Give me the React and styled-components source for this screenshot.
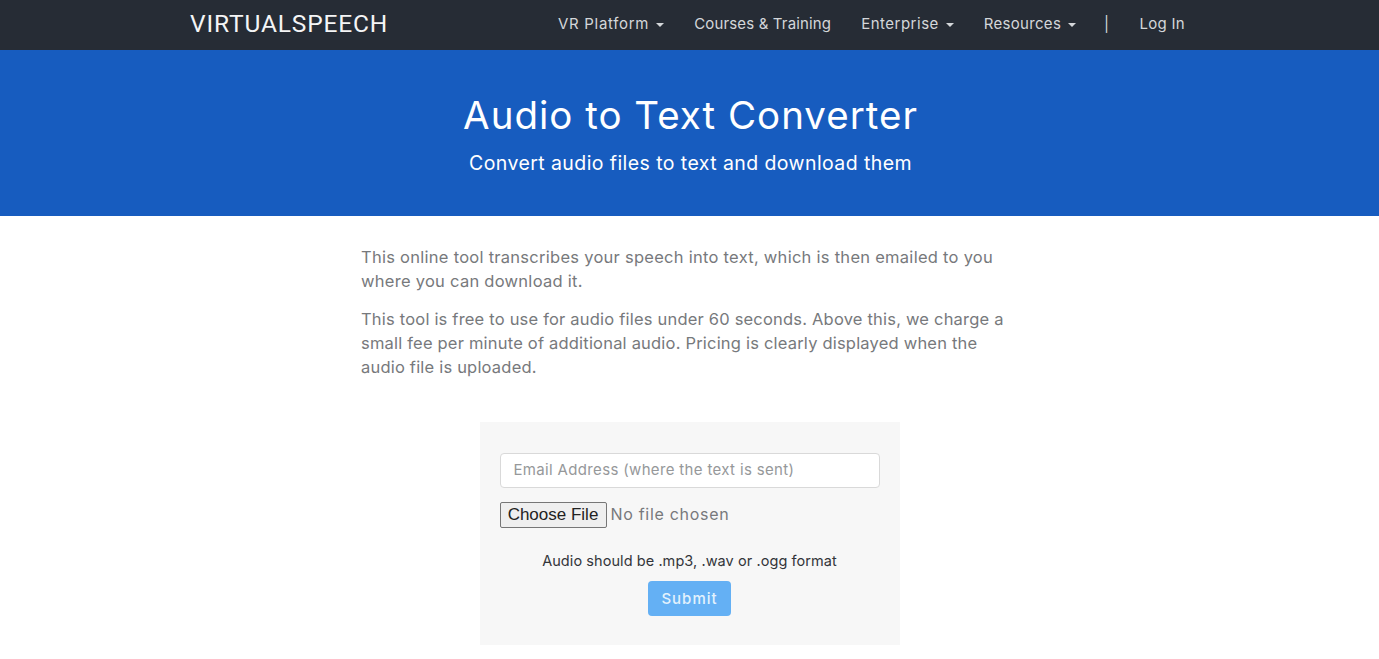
import styled, { createGlobalStyle } from "styled-components"

const GlobalStyle = createGlobalStyle`
    html, body {
        margin: 0;
        padding: 0;
        background: #fff;
        font-family: "Inter", "Open Sans", sans-serif;
    }
    * {
        box-sizing: border-box;
    }
`;

const NavBar = styled.nav`
    height: 50px;
    background: #262c35;
    display: flex;
    align-items: center;
    justify-content: space-between;
    padding: 0 194px 3px 190px;
`;

const Logo = styled.a`
    font-family: "Roboto", sans-serif;
    font-weight: 400;
    font-size: 24.5px;
    letter-spacing: 0.85px;
    color: #f4f5f6;
`;

const NavLinks = styled.div`
    display: flex;
    align-items: center;
    gap: 30px;
`;

const NavLink = styled.a`
    display: flex;
    align-items: center;
    gap: 7px;
    font-size: 15px;
    letter-spacing: ${(props) => props.$spacing || "0.3px"};
    color: #d4d7da;
`;

const Divider = styled(NavLink)`
    margin-left: -2px;
`;

const Caret = styled.span`
    width: 0;
    height: 0;
    margin-top: 2px;
    border-left: 4px solid transparent;
    border-right: 4px solid transparent;
    border-top: 4px solid #d4d7da;
`;

const Hero = styled.header`
    height: 166px;
    background: #175cbf;
    color: #fff;
    text-align: center;
    padding: 42px 0 0 2px;
`;

const Title = styled.h1`
    margin: 0;
    font-size: 38.5px;
    line-height: 46px;
    font-weight: 400;
    letter-spacing: 1px;
`;

const Subtitle = styled.p`
    margin: 12px 0 0;
    font-size: 19.5px;
    line-height: 26px;
    letter-spacing: 0.42px;
`;

const Content = styled.main`
    width: 657px;
    margin: 0 auto;
    padding-top: 29px;
`;

const Paragraph = styled.p`
    margin: 0 0 14px;
    font-size: 16.5px;
    line-height: 24px;
    letter-spacing: ${(props) => props.$spacing || "0.27px"};
    color: #77797c;
`;

const FormBox = styled.form`
    width: 420px;
    height: 223px;
    margin: 43px auto 0;
    padding: 31px 20px 0;
    background: #f7f7f7;
    display: flex;
    flex-direction: column;
`;

const EmailInput = styled.input`
    width: 100%;
    height: 35px;
    padding: 0 13px 2px;
    border: 1px solid #d9d9d9;
    border-radius: 4px;
    background: #fff;
    font-family: inherit;
    font-size: 15px;
    letter-spacing: 0.34px;

    &::placeholder {
        color: #96989a;
        opacity: 1;
    }
`;

const FileInput = styled.input`
    margin-top: 14px;
    height: 26px;
    font-family: "Inter", sans-serif;
    font-size: 16px;
    letter-spacing: 0.7px;
    color: #77797c;

    &::file-selector-button {
        width: 107px;
        height: 26px;
        margin-right: 4px;
        padding: 0;
        border: 1px solid #767676;
        border-radius: 2px;
        background: #efefef;
        color: #222;
        font-family: "Liberation Sans", sans-serif;
        font-size: 17px;
        letter-spacing: 0;
    }
`;

const Hint = styled.p`
    margin: 23px 0 0;
    text-align: center;
    font-size: 14.5px;
    line-height: 20px;
    letter-spacing: 0.07px;
    color: #33353a;
`;

const SubmitButton = styled.button`
    align-self: center;
    width: 83px;
    height: 35px;
    margin-top: 10px;
    border: 0;
    border-radius: 4px;
    background: #64b0f4;
    color: #e3f2fd;
    font-family: inherit;
    font-size: 15px;
    font-weight: 500;
    letter-spacing: 1px;
`;

const App = () => {
    return (
        <>
            <GlobalStyle />
            <NavBar>
                <Logo>VIRTUALSPEECH</Logo>
                <NavLinks>
                    <NavLink $spacing="0.7px">VR Platform <Caret /></NavLink>
                    <NavLink $spacing="0.15px">Courses &amp; Training</NavLink>
                    <NavLink $spacing="0.5px">Enterprise <Caret /></NavLink>
                    <NavLink>Resources <Caret /></NavLink>
                    <Divider>|</Divider>
                    <NavLink>Log In</NavLink>
                </NavLinks>
            </NavBar>
            <Hero>
                <Title>Audio to Text Converter</Title>
                <Subtitle>Convert audio files to text and download them</Subtitle>
            </Hero>
            <Content>
                <Paragraph>This online tool transcribes your speech into text, which is then emailed to you where you can download it.</Paragraph>
                <Paragraph $spacing="0.2px">This tool is free to use for audio files under 60 seconds. Above this, we charge a small fee per minute of additional audio. Pricing is clearly displayed when the audio file is uploaded.</Paragraph>
                <FormBox>
                    <EmailInput type="email" placeholder="Email Address (where the text is sent)" />
                    <FileInput type="file" />
                    <Hint>Audio should be .mp3, .wav or .ogg format</Hint>
                    <SubmitButton type="button">Submit</SubmitButton>
                </FormBox>
            </Content>
        </>
    )
}

export default App;
